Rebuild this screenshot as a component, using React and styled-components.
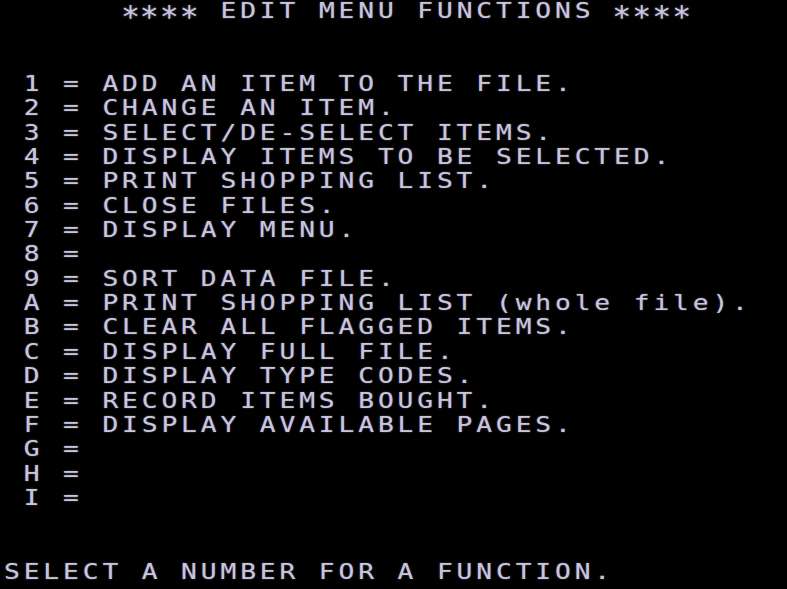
import React from "react";
import styled, { createGlobalStyle } from "styled-components";

const GlobalStyle = createGlobalStyle`
  html, body {
    margin: 0;
    padding: 0;
    background: #000;
  }
  #root {
    width: 787px;
    height: 589px;
    overflow: hidden;
  }
`;

const CELL_H = 24.35;

const Screen = styled.div`
  width: 787px;
  height: 589px;
  background: #000;
  display: flex;
  flex-direction: column;
  overflow: hidden;
  margin-top: -1px;
  box-sizing: border-box;
`;

const Line = styled.div`
  height: ${CELL_H}px;
  line-height: ${CELL_H}px;
  flex: none;
  white-space: pre;
  font-family: "DejaVu Sans Mono", "Liberation Mono", monospace;
  font-size: 21px;
  letter-spacing: 3.1px;
  color: #c9c5e0;
  text-shadow: 0 0 1.5px rgba(201, 197, 224, 0.55);
  padding-left: 3.2px;
  transform: scaleX(1.25);
  transform-origin: left center;
`;

const Star = styled.span`
  display: inline-block;
  letter-spacing: 0;
  margin-right: 3.1px;
  transform: translateY(4.5px) scale(1.2, 1.4);
  transform-origin: center 30%;
`;

const Blank = styled.div`
  height: ${(p) => p.$rows * CELL_H}px;
  flex: none;
`;

const Menu = styled.div`
  display: flex;
  flex-direction: column;
`;

const Prompt = styled(Line)`
  margin-top: auto;
  margin-bottom: 4px;
`;

const items = [
  ["1", "ADD AN ITEM TO THE FILE."],
  ["2", "CHANGE AN ITEM."],
  ["3", "SELECT/DE-SELECT ITEMS."],
  ["4", "DISPLAY ITEMS TO BE SELECTED."],
  ["5", "PRINT SHOPPING LIST."],
  ["6", "CLOSE FILES."],
  ["7", "DISPLAY MENU."],
  ["8", ""],
  ["9", "SORT DATA FILE."],
  ["A", "PRINT SHOPPING LIST (whole file)."],
  ["B", "CLEAR ALL FLAGGED ITEMS."],
  ["C", "DISPLAY FULL FILE."],
  ["D", "DISPLAY TYPE CODES."],
  ["E", "RECORD ITEMS BOUGHT."],
  ["F", "DISPLAY AVAILABLE PAGES."],
  ["G", ""],
  ["H", ""],
  ["I", ""],
];

function Stars() {
  return (
    <>
      {[0, 1, 2, 3].map((i) => (
        <Star key={i}>*</Star>
      ))}
    </>
  );
}

export default function App() {
  return (
    <>
      <GlobalStyle />
      <Screen>
        <Line>
          {"      "}
          <Stars />
          {" EDIT MENU FUNCTIONS "}
          <Stars />
        </Line>
        <Blank $rows={2} />
        <Menu>
          {items.map(([k, label]) => (
            <Line key={k}>{` ${k} =${label ? " " + label : ""}`}</Line>
          ))}
        </Menu>
        <Prompt>{"SELECT A NUMBER FOR A FUNCTION."}</Prompt>
      </Screen>
    </>
  );
}
